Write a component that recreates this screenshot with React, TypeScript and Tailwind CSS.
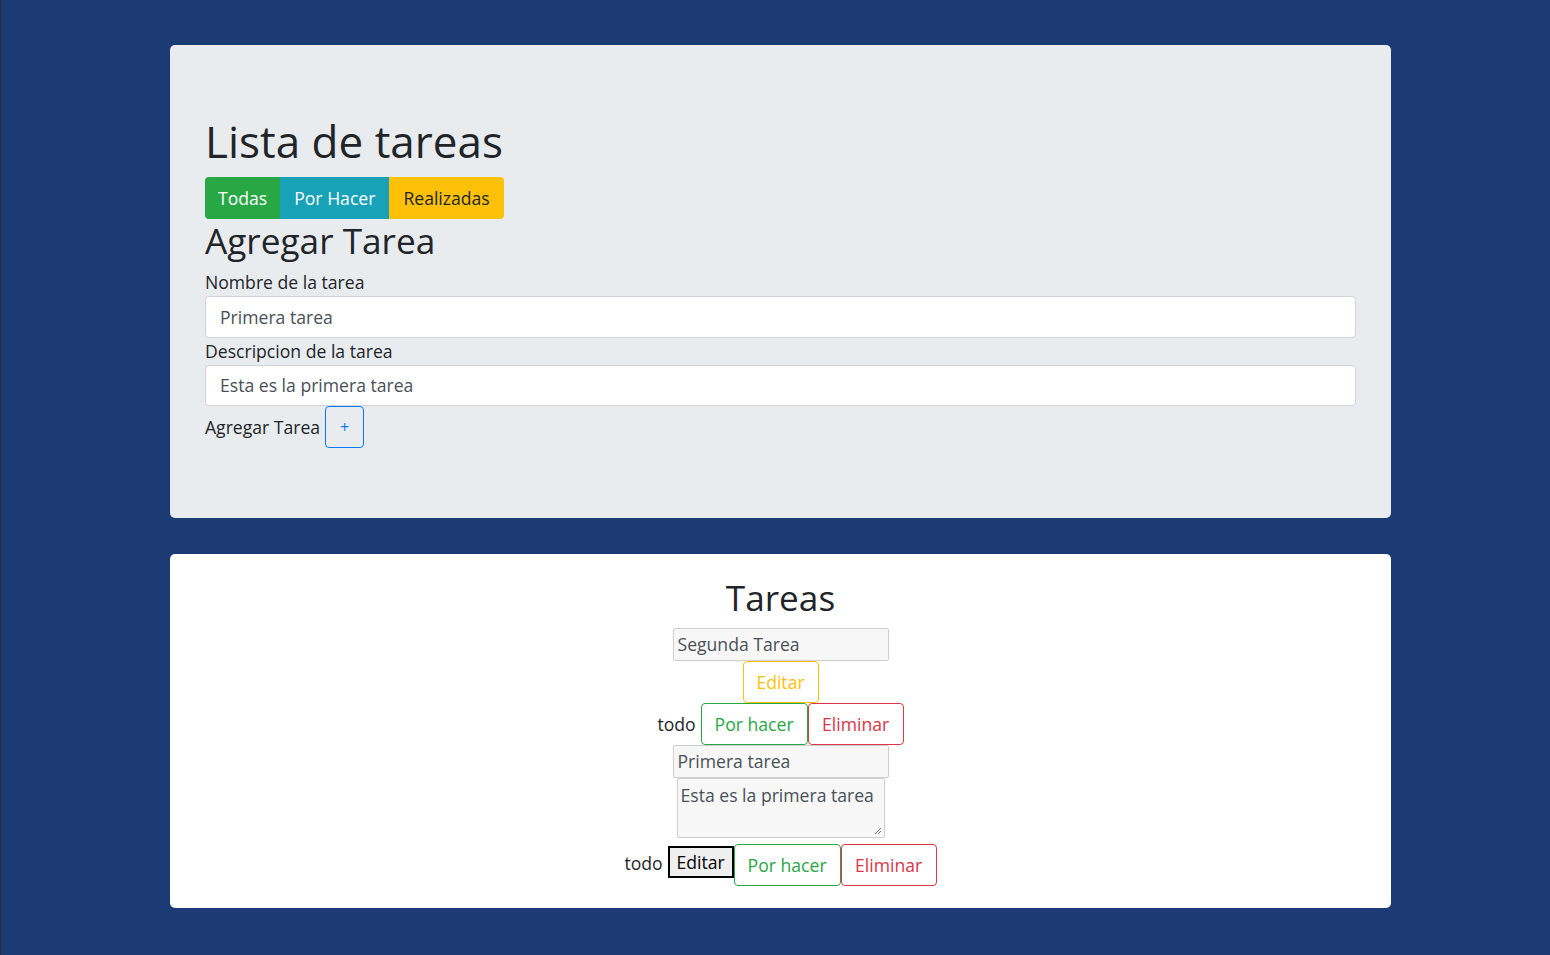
import React from "react";

const font = { fontFamily: '"Open Sans", "Noto Sans", sans-serif' };

function FilterButtons() {
  return (
    <div className="flex">
      <button className="h-[42px] px-[13px] bg-[#28a745] text-white text-[17.6px] leading-[26.4px] rounded-l-[4px]">
        Todas
      </button>
      <button className="h-[42px] px-[14px] bg-[#17a2b8] text-white text-[17.6px] leading-[26.4px]">
        Por Hacer
      </button>
      <button className="h-[42px] px-[14px] bg-[#ffc107] text-[#212529] text-[17.6px] leading-[26.4px] rounded-r-[4px]">
        Realizadas
      </button>
    </div>
  );
}

function Field({ label, value }: { label: string; value: string }) {
  return (
    <div>
      <div className="text-[17.6px] leading-[27px]">{label}</div>
      <div className="h-[41.5px] bg-white border border-[#ced4da] rounded-[4px] px-[14px] flex items-center text-[17.6px] text-[#495057]">
        {value}
      </div>
    </div>
  );
}

function OutlineBtn({ color, children, w }: { color: "warning" | "success" | "danger"; children: React.ReactNode; w: string }) {
  const cls =
    color === "warning"
      ? "border-[#ffc107] text-[#ffc107]"
      : color === "success"
      ? "border-[#28a745] text-[#28a745]"
      : "border-[#dc3545] text-[#dc3545]";
  return (
    <button className={`h-[42px] ${w} border rounded-[4px] bg-white text-[17.6px] leading-[26.4px] ${cls}`}>
      {children}
    </button>
  );
}

export default function App() {
  return (
    <div className="min-h-screen bg-[#1c3a74] border-l border-[#2a2f36] pt-[45px] pb-[47px] text-[#212529]" style={font}>
      <div className="ml-[169px] w-[1221px]">
        {/* Form */}
        <div className="bg-[#e9ecef] rounded-[5px] px-[35px] pt-[70px] pb-[70px]">
          <h1 className="text-[44px] leading-[53px] mb-[9px]">Lista de tareas</h1>
          <div className="flex">
            <FilterButtons />
          </div>
          <h2 className="text-[35.2px] leading-[42px] mb-[8px]">Agregar Tarea</h2>
          <Field label="Nombre de la tarea" value="Primera tarea" />
          <Field label="Descripcion de la tarea" value="Esta es la primera tarea" />
          <div className="flex items-center gap-[5px] h-[42px]">
            <span className="text-[17.6px]">Agregar Tarea</span>
            <button className="w-[39px] h-[42px] border border-[#007bff] rounded-[4px] text-[#007bff] text-[16px] flex items-center justify-center">
              +
            </button>
          </div>
        </div>

        {/* Task list */}
        <div className="bg-white rounded-[5px] mt-[36px] pt-[22px] pb-[22px] flex flex-col items-center">
          <h2 className="text-[35.2px] leading-[42px] mb-[10px]">Tareas</h2>

          <div className="w-[216px] h-[33px] bg-[#f7f7f7] border border-[#cfcfcf] rounded-[2px] px-[4px] flex items-center text-[17.6px] text-[#495057]">
            Segunda Tarea
          </div>
          <OutlineBtn color="warning" w="w-[76px]">Editar</OutlineBtn>
          <div className="flex items-center">
            <span className="text-[17.6px] mr-[5px]">todo</span>
            <OutlineBtn color="success" w="w-[107px]">Por hacer</OutlineBtn>
            <OutlineBtn color="danger" w="w-[96px]">Eliminar</OutlineBtn>
          </div>

          <div className="w-[216px] h-[33px] bg-[#f7f7f7] border border-[#cfcfcf] rounded-[2px] px-[4px] flex items-center text-[17.6px] text-[#495057]">
            Primera tarea
          </div>
          <div className="relative w-[208px] h-[60px] bg-[#f7f7f7] border border-[#cfcfcf] rounded-[2px] px-[3px] pt-[3px] text-[17.6px] leading-[26px] text-[#495057]">
            Esta es la primera tarea
            <svg className="absolute right-[2px] bottom-[2px]" width="8" height="8" viewBox="0 0 8 8">
              <path d="M7 1L1 7M7 4L4 7" stroke="#777" strokeWidth="1" />
            </svg>
          </div>
          <div className="flex items-start mt-[6px]">
            <span className="text-[17.6px] leading-[26px] mr-[5px] mt-[6px]">todo</span>
            <button className="w-[66px] h-[32px] mt-[2px] border-2 border-black bg-[#efefef] text-[17.6px] leading-[26px] text-black">
              Editar
            </button>
            <OutlineBtn color="success" w="w-[107px]">Por hacer</OutlineBtn>
            <OutlineBtn color="danger" w="w-[96px]">Eliminar</OutlineBtn>
          </div>
        </div>
      </div>
    </div>
  );
}
